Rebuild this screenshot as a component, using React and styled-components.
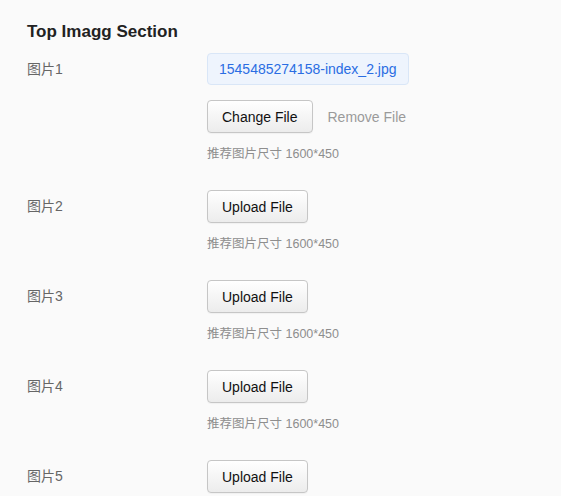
import React from 'react';
import styled, { createGlobalStyle } from 'styled-components';

const GlobalStyle = createGlobalStyle`
  html, body {
    margin: 0;
    padding: 0;
    background: #fafafa;
  }
  body {
    font-family: 'Liberation Sans', Arial, 'Noto Sans CJK SC', sans-serif;
    -webkit-font-smoothing: antialiased;
  }
`;

const Page = styled.div`
  padding: 20px 27px;
`;

const Title = styled.h2`
  margin: 0 0 9px;
  font-size: 17px;
  line-height: 24px;
  font-weight: 700;
  color: #222;
`;

const Row = styled.div`
  display: flex;
  align-items: flex-start;
  margin-bottom: 27px;
`;

const Label = styled.div`
  width: 180px;
  flex: none;
  font-size: 14px;
  line-height: ${p => (p.$tall ? '32px' : '33px')};
  color: #666;
`;

const Field = styled.div`
  display: flex;
  flex-direction: column;
  align-items: flex-start;
`;

const FileChip = styled.div`
  height: 30px;
  line-height: 30px;
  padding: 0 11px;
  border: 1px solid #d9e6f7;
  border-radius: 4px;
  background: #eef4fd;
  color: #2a6de3;
  font-size: 14px;
  margin-bottom: 15px;
`;

const Actions = styled.div`
  display: flex;
  align-items: center;
  gap: 15px;
`;

const Button = styled.button`
  height: 33px;
  padding: 0 14px;
  border: 1px solid #c6c6c6;
  border-radius: 4px;
  background: linear-gradient(#ffffff, #ececec);
  box-shadow: 0 1px 1px rgba(0, 0, 0, 0.04);
  font-family: inherit;
  font-size: 14px;
  color: #111;
  cursor: pointer;
`;

const LinkButton = styled.span`
  font-size: 14px;
  color: #9a9a9a;
  cursor: pointer;
`;

const Hint = styled.div`
  margin-top: 12px;
  font-size: 12.5px;
  line-height: 18px;
  color: #8e8e8e;
`;

const items = [
  { name: '图片1', file: '1545485274158-index_2.jpg' },
  { name: '图片2' },
  { name: '图片3' },
  { name: '图片4' },
  { name: '图片5' },
];

export default function App() {
  return (
    <>
      <GlobalStyle />
      <Page>
        <Title>Top Imagg Section</Title>
        {items.map(item => (
          <Row key={item.name}>
            <Label $tall={!!item.file}>{item.name}</Label>
            <Field>
              {item.file && <FileChip>{item.file}</FileChip>}
              <Actions>
                <Button type="button">{item.file ? 'Change File' : 'Upload File'}</Button>
                {item.file && <LinkButton>Remove File</LinkButton>}
              </Actions>
              <Hint>推荐图片尺寸 1600*450</Hint>
            </Field>
          </Row>
        ))}
      </Page>
    </>
  );
}
